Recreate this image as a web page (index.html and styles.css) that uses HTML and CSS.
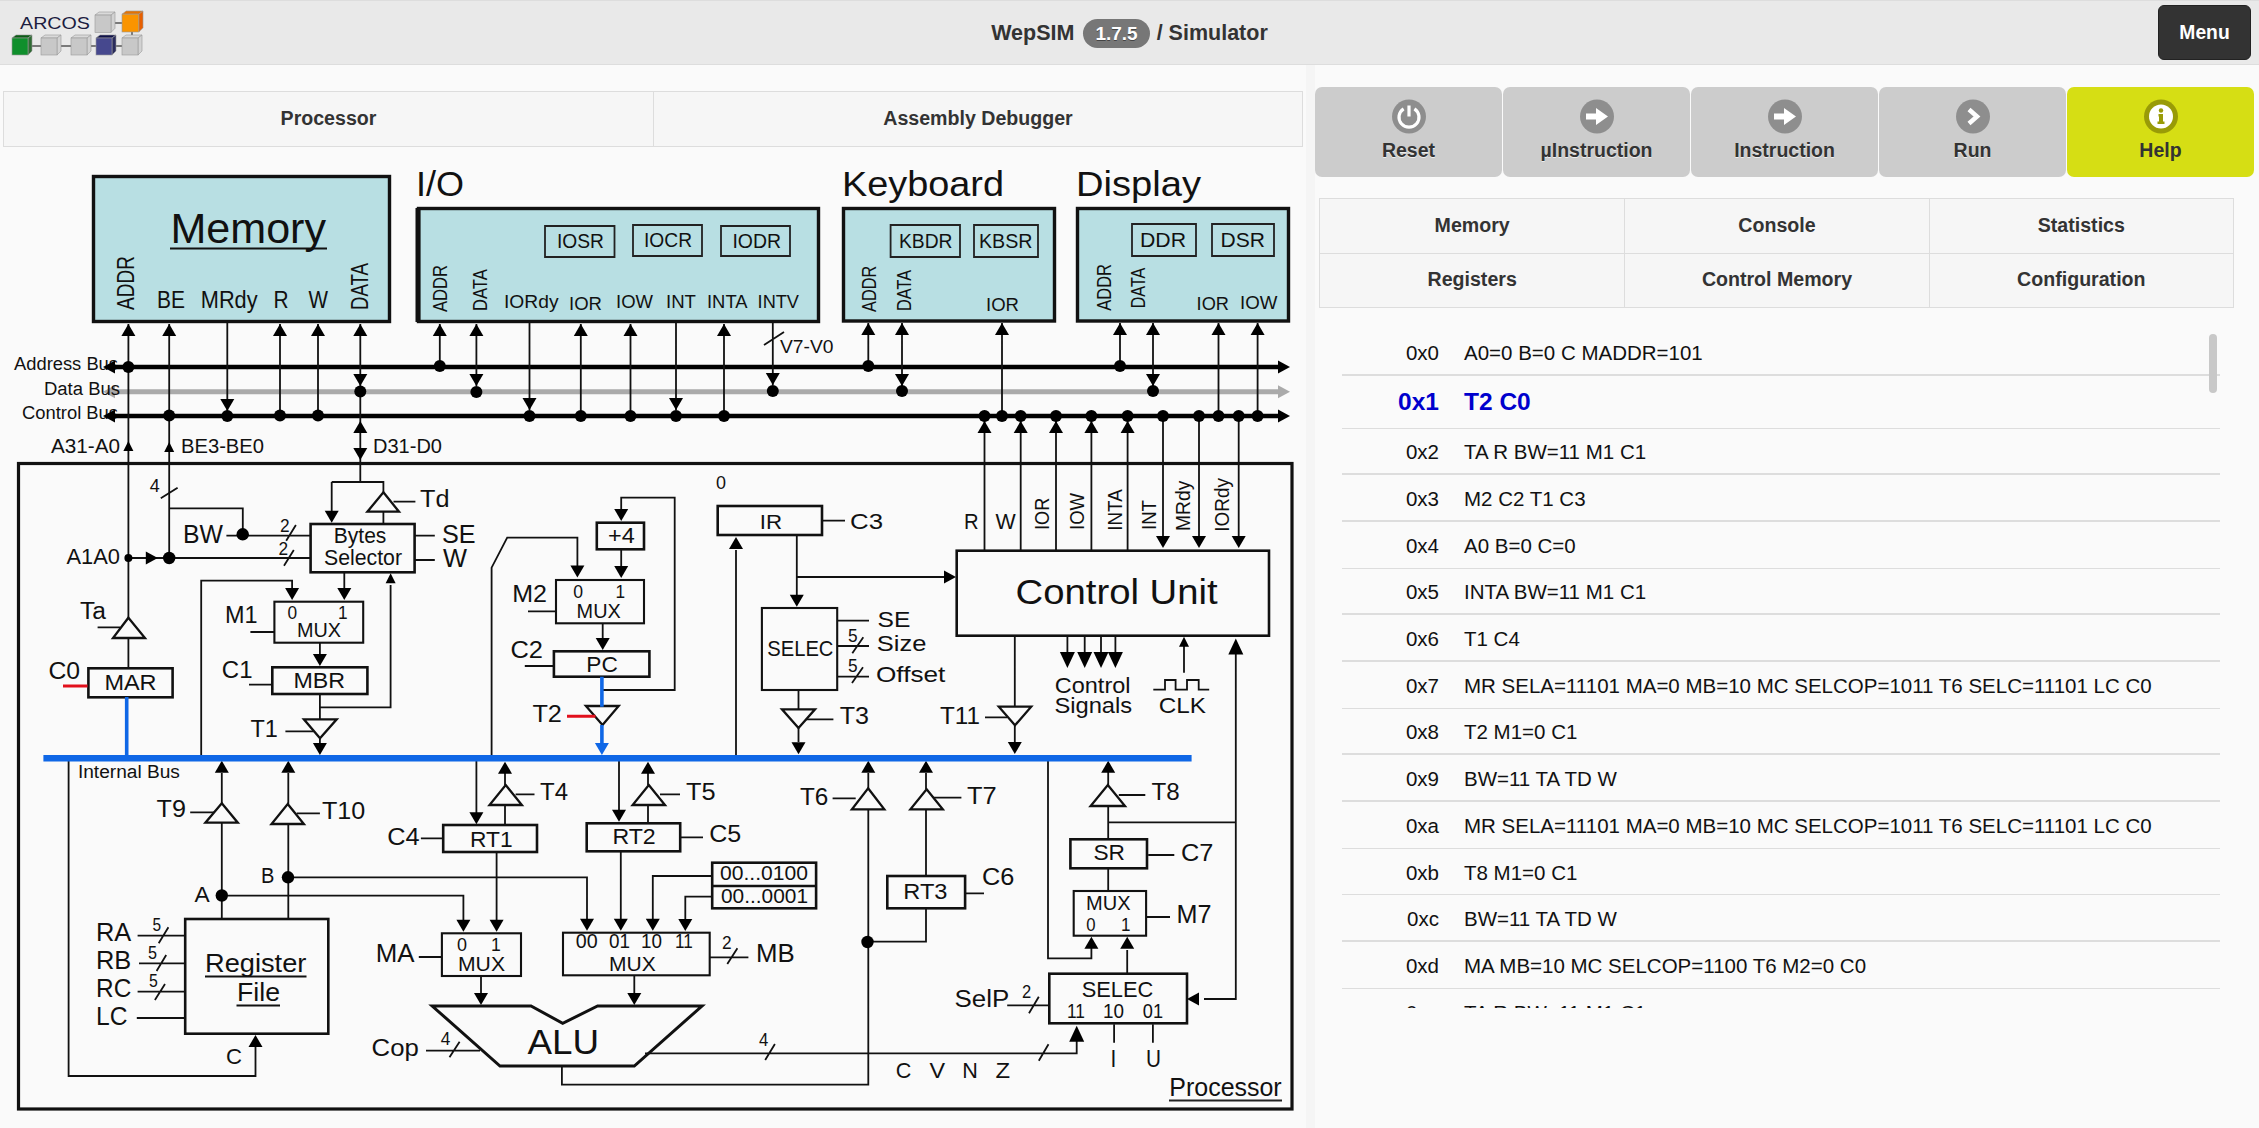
FILE: index.html
```html
<!DOCTYPE html>
<html lang="en">
<head>
    <meta charset="UTF-8">
    <meta name="viewport" content="width=device-width, initial-scale=1.0">
    <title>WepSIM</title>
    <link rel="stylesheet" href="styles.css">
</head>
<body>

    <header class="navbar">
        <svg class="logo" width="150" height="64" viewBox="0 0 150 64">
            <defs>
                <g id="cube">
                    <path class="cube-top" d="M0 3 L4 0 H20 L16 3 Z"/>
                    <path class="cube-side" d="M16 3 L20 0 V16 L16 20 Z"/>
                    <rect class="cube-front" x="0" y="3" width="16" height="17"/>
                </g>
            </defs>
            <text class="logo-text" x="20" y="29" textLength="70" lengthAdjust="spacingAndGlyphs">ARCOS</text>
            <path class="logo-link" d="M112 23H122 M132 32V38 M30 46H41 M58 46H71 M88 46H96 M114 46H122"/>
            <use class="cube-grey" href="#cube" transform="translate(95 12) scale(1 1.02)"/>
            <use class="cube-orange" href="#cube" transform="translate(122 11) scale(1.05 1.05)"/>
            <use class="cube-green" href="#cube" transform="translate(12 35)"/>
            <use class="cube-grey" href="#cube" transform="translate(41 35)"/>
            <use class="cube-grey" href="#cube" transform="translate(71 35)"/>
            <use class="cube-blue" href="#cube" transform="translate(96 35)"/>
            <use class="cube-grey" href="#cube" transform="translate(122 35)"/>
        </svg>
        <h1 class="title">WepSIM <span class="badge">1.7.5</span> / Simulator</h1>
        <div class="nav-right"><button class="menu-btn">Menu</button></div>
    </header>

    <main class="page">
        <section class="left">
            <nav class="tabs tabs-left">
                <a>Processor</a>
                <a>Assembly Debugger</a>
            </nav>

            <svg class="diagram" width="1306" height="981" viewBox="0 147 1306 981">
                <defs>
                    <path id="au" d="M0 0L7 12H-7Z"/>
                    <path id="ad" d="M0 0L-7 -12H7Z"/>
                    <path id="ar" d="M0 0L-12 -6.5V6.5Z"/>
                    <path id="al" d="M0 0L12 -6.5V6.5Z"/>
                    <path id="aus" d="M0 0L5 10H-5Z"/>
                    <path id="aul" d="M0 0L7.5 16H-7.5Z"/>
                    <path id="adl" d="M0 0L-7.5 -16H7.5Z"/>
                </defs>

                <!-- memory and peripherals -->
                <rect class="device" x="93.5" y="176.5" width="296" height="145"/>
                <rect class="device" x="418.5" y="208.5" width="400" height="113"/>
                <rect class="device" x="843.5" y="208.5" width="211" height="112.5"/>
                <rect class="device" x="1077.5" y="208.5" width="211" height="112.5"/>
                <path class="box" d="M418 208V322"/>

                <text class="t-title" x="416" y="196" textLength="48" lengthAdjust="spacingAndGlyphs">I/O</text>
                <text class="t-title" x="842" y="196" textLength="162" lengthAdjust="spacingAndGlyphs">Keyboard</text>
                <text class="t-title" x="1076" y="196" textLength="125" lengthAdjust="spacingAndGlyphs">Display</text>

                <text class="t-big" x="170.5" y="243" textLength="155.5" lengthAdjust="spacingAndGlyphs">Memory</text>
                <path class="ul3" d="M170 248.5H327"/>
                <text class="rot-lg" x="134" y="310" transform="rotate(-90 134 310)" textLength="54" lengthAdjust="spacingAndGlyphs">ADDR</text>
                <text class="t-xl" x="157" y="308" textLength="28" lengthAdjust="spacingAndGlyphs">BE</text>
                <text class="t-xl" x="200.8" y="308" textLength="56.8" lengthAdjust="spacingAndGlyphs">MRdy</text>
                <text class="t-xl" x="273.6" y="308" textLength="15.1" lengthAdjust="spacingAndGlyphs">R</text>
                <text class="t-xl" x="308.5" y="308" textLength="19.5" lengthAdjust="spacingAndGlyphs">W</text>
                <text class="rot-lg" x="368" y="310" transform="rotate(-90 368 310)" textLength="47" lengthAdjust="spacingAndGlyphs">DATA</text>

                <path class="thin" d="M545 226H614.5V257H545Z M633 225H702V256H633Z M721 226H790V256H721Z M890.6 225H960V257H890.6Z M974 225H1038V257H974Z M1132 224H1196V256H1132Z M1212 224H1274V256H1212Z"/>
                <text class="t-r" x="557" y="248" textLength="47" lengthAdjust="spacingAndGlyphs">IOSR</text>
                <text class="t-r" x="644" y="247" textLength="48" lengthAdjust="spacingAndGlyphs">IOCR</text>
                <text class="t-r" x="732.4" y="248" textLength="48.6" lengthAdjust="spacingAndGlyphs">IODR</text>
                <text class="t-r" x="899" y="248" textLength="53.5" lengthAdjust="spacingAndGlyphs">KBDR</text>
                <text class="t-r" x="979" y="248" textLength="53.5" lengthAdjust="spacingAndGlyphs">KBSR</text>
                <text class="t-r" x="1140" y="246.7" textLength="46" lengthAdjust="spacingAndGlyphs">DDR</text>
                <text class="t-r" x="1220.6" y="247" textLength="44.4" lengthAdjust="spacingAndGlyphs">DSR</text>

                <text class="rot" x="447.4" y="312" transform="rotate(-90 447.4 312)" textLength="47" lengthAdjust="spacingAndGlyphs">ADDR</text>
                <text class="rot" x="487" y="311" transform="rotate(-90 487 311)" textLength="41.7" lengthAdjust="spacingAndGlyphs">DATA</text>
                <text class="t-s" x="504" y="308" textLength="54.5" lengthAdjust="spacingAndGlyphs">IORdy</text>
                <text class="t-s" x="569" y="310" textLength="33" lengthAdjust="spacingAndGlyphs">IOR</text>
                <text class="t-s" x="616" y="308" textLength="37" lengthAdjust="spacingAndGlyphs">IOW</text>
                <text class="t-s" x="666" y="308" textLength="30" lengthAdjust="spacingAndGlyphs">INT</text>
                <text class="t-s" x="707" y="308" textLength="40.5" lengthAdjust="spacingAndGlyphs">INTA</text>
                <text class="t-s" x="757.6" y="308" textLength="41.4" lengthAdjust="spacingAndGlyphs">INTV</text>

                <text class="rot" x="876" y="312" transform="rotate(-90 876 312)" textLength="46.3" lengthAdjust="spacingAndGlyphs">ADDR</text>
                <text class="rot" x="911" y="311" transform="rotate(-90 911 311)" textLength="41" lengthAdjust="spacingAndGlyphs">DATA</text>
                <text class="t-s" x="986" y="311" textLength="33" lengthAdjust="spacingAndGlyphs">IOR</text>
                <text class="rot" x="1111" y="310.7" transform="rotate(-90 1111 310.7)" textLength="46.7" lengthAdjust="spacingAndGlyphs">ADDR</text>
                <text class="rot" x="1145" y="308.3" transform="rotate(-90 1145 308.3)" textLength="40.6" lengthAdjust="spacingAndGlyphs">DATA</text>
                <text class="t-s" x="1196.6" y="310" textLength="32.4" lengthAdjust="spacingAndGlyphs">IOR</text>
                <text class="t-s" x="1240" y="309" textLength="37.4" lengthAdjust="spacingAndGlyphs">IOW</text>

                <!-- system buses -->
                <text class="t-xs" x="14" y="370" textLength="104" lengthAdjust="spacingAndGlyphs">Address Bus</text>
                <text class="t-xs" x="22" y="419" textLength="96" lengthAdjust="spacingAndGlyphs">Control Bus</text>
                <path class="bus" d="M112 367H1282 M112 416H1282"/>
                <path class="bus-grey" d="M112 391.7H1282"/>
                <use href="#al" x="103" y="367"/><use href="#al" x="103" y="416"/>
                <use href="#ar" x="1290" y="367"/><use href="#ar" x="1290" y="416"/>
                <use class="grey-fill" href="#al" x="103" y="391.7"/><use class="grey-fill" href="#ar" x="1290" y="391.7"/>
                <text class="t-xs" x="44" y="395" textLength="76" lengthAdjust="spacingAndGlyphs">Data Bus</text>

                <path class="wire" d="M128.4 324V618 M169.2 324V558 M227.3 323V411 M280 324V416 M318 324V416 M360.3 324V482
                    M439.8 324V366 M476.4 324V386 M529.5 323V410 M580.8 324V416 M630.5 324V416 M676 323V410 M724 324V416 M772.8 323V385 M764 345L784 332
                    M868.3 323V366 M902 323V386 M1002 323V416 M1120 323V366 M1153 323V386 M1218.5 323V416 M1257.6 323V416
                    M984.5 421V551 M1020.7 421V551 M1056 421V551 M1091.4 421V551 M1127.6 421V551 M1163 416V542 M1199 416V542 M1238.7 416V542"/>

                <g>
                    <use href="#au" x="128.4" y="324"/><use href="#au" x="169.2" y="324"/><use href="#au" x="280" y="324"/><use href="#au" x="318" y="324"/><use href="#au" x="360.3" y="324"/>
                    <use href="#ad" x="227.3" y="411"/><use href="#ad" x="360.3" y="386"/>
                    <use href="#au" x="439.8" y="324"/><use href="#au" x="476.4" y="324"/><use href="#ad" x="476.4" y="386"/><use href="#ad" x="529.5" y="410"/><use href="#au" x="580.8" y="324"/><use href="#au" x="630.5" y="324"/>
                    <use href="#ad" x="676" y="410"/><use href="#au" x="724" y="324"/><use href="#ad" x="772.8" y="385"/>
                    <use href="#au" x="868.3" y="323"/><use href="#au" x="902" y="323"/><use href="#ad" x="902" y="386"/><use href="#au" x="1002" y="323"/>
                    <use href="#au" x="1120" y="323"/><use href="#au" x="1153" y="323"/><use href="#ad" x="1153" y="386"/><use href="#au" x="1218.5" y="323"/><use href="#au" x="1257.6" y="323"/>
                    <use href="#au" x="984.5" y="421"/><use href="#au" x="1020.7" y="421"/><use href="#au" x="1056" y="421"/><use href="#au" x="1091.4" y="421"/><use href="#au" x="1127.6" y="421"/>
                    <use href="#ad" x="1163" y="548"/><use href="#ad" x="1199" y="548"/><use href="#ad" x="1238.7" y="548"/>
                    <use href="#aus" x="128.4" y="441"/><use href="#aus" x="169.2" y="442"/>
                    <use href="#au" x="360.3" y="421"/><use href="#ad" x="360.3" y="460"/>
                </g>

                <g class="dots">
                    <circle cx="128.4" cy="367" r="6"/><circle cx="439.8" cy="366" r="6"/><circle cx="868.3" cy="366" r="6"/><circle cx="1120" cy="366" r="6"/>
                    <circle cx="360.3" cy="391.5" r="6"/><circle cx="476.4" cy="392" r="6"/><circle cx="772.8" cy="391" r="6"/><circle cx="902" cy="391" r="6"/><circle cx="1153" cy="391" r="6"/>
                    <circle cx="169.2" cy="415.5" r="6"/><circle cx="227.3" cy="416" r="6"/><circle cx="280" cy="415.5" r="6"/><circle cx="318" cy="415.5" r="6"/><circle cx="529.5" cy="416" r="6"/><circle cx="580.8" cy="416" r="6"/><circle cx="630.5" cy="416" r="6"/><circle cx="676" cy="416" r="6"/><circle cx="724" cy="416" r="6"/>
                    <circle cx="984.5" cy="416" r="6"/><circle cx="1002" cy="416" r="6"/><circle cx="1020.7" cy="416" r="6"/><circle cx="1056" cy="416" r="6"/><circle cx="1091.4" cy="416" r="6"/><circle cx="1127.6" cy="416" r="6"/><circle cx="1163" cy="416" r="6"/><circle cx="1199" cy="416" r="6"/><circle cx="1218.5" cy="416" r="6"/><circle cx="1238.7" cy="416" r="6"/><circle cx="1257.6" cy="416" r="6"/>
                </g>

                <text class="t-m" x="51" y="452.7" textLength="69" lengthAdjust="spacingAndGlyphs">A31-A0</text>
                <text class="t-m" x="181" y="453" textLength="83" lengthAdjust="spacingAndGlyphs">BE3-BE0</text>
                <text class="t-m" x="373" y="453" textLength="69" lengthAdjust="spacingAndGlyphs">D31-D0</text>
                <text class="t-s" x="780" y="353" textLength="53.4" lengthAdjust="spacingAndGlyphs">V7-V0</text>

                <!-- processor frame -->
                <rect class="frame" x="18.5" y="463.5" width="1273.5" height="645.5"/>
                <text class="t-h" x="1169.3" y="1095.7" textLength="112.4" lengthAdjust="spacingAndGlyphs">Processor</text>
                <path class="thin" d="M1169 1100.5H1282"/>

                <!-- thin wires of the processor -->
                <path class="wire" d="M331.7 482H383.4V493 M331.7 482V511 M383.4 511V524
                    M169.2 508.3H242.8V534 M226.4 535.7H310.6 M128.4 558H310.6
                    M160.8 498.3L177.6 487.7 M286.2 540.7L295.9 525 M284 565.7L293.8 550
                    M393.5 501.7H415.4 M414.6 535.7H434.8 M414.6 560H434.8
                    M344.3 572V590 M292.1 591V580.7H201.2V756
                    M319.9 642.7V654 M319.9 694V719.3 M319.9 707.3H390.6V585 M319.9 738.3V745
                    M250.4 632H274.4 M249 684.7H271.5 M285.4 731.3H313.6
                    M97.6 627.3H120 M128.4 638V668
                    M491.6 756V567.7L507.2 537.7H577.4V566
                    M602.7 690H674.7V497.7H621.2V511 M621.2 549.3V566 M602.7 623.3V639
                    M528 611.3H555.6 M524.8 666H553.4
                    M736 550V757 M796.8 535V596 M796.8 577H945 M822 520.7H845
                    M837 620.7H869 M837 646H869 M837 676.7H869 M852.3 653.3L863.3 637.3 M852 683L863 667.3
                    M798.5 690V709.3 M798.5 728V742 M805 719.3H833.4
                    M1014.8 635.7V706.7 M1014.8 725.3V745 M985 717.3H1007
                    M1067.4 636V653 M1084.7 636V653 M1101 636V653 M1115.4 636V653
                    M1184 672.7V642 M1153.3 689.7H1165V680H1175.6V689.7H1187V680H1198.7V689.7H1209.2
                    M1235.8 653V999H1204
                    M68.6 761V1076H255.5V1043
                    M221.8 773V803.3 M221.8 822.7V919 M190.2 812.3H214.6
                    M288.3 773V804 M288.3 824V919 M296.7 813.3H319.9
                    M137.6 935.7H185 M139 963.3H185 M137.6 991.7H185 M136.8 1018H185
                    M158.7 943.3L168.4 927.3 M156.6 971L166.2 955 M154.9 1000L165 984
                    M476.4 761V813 M505 772.7V785 M505 805V825 M515.6 794.3H534.5 M420.9 838.3H443.2
                    M496.6 852V920 M221.8 895.7H463.4V920 M288.3 877.3H587V919
                    M418.8 957H441.9 M481 976V996
                    M426 1050.7H480 M449.5 1057.3L459.6 1041.7
                    M561.9 1066V1084.7H868.3V809 M868.3 773V788.3 M832.6 798.3H855.7
                    M926 773V789.3 M926 809.3V876 M926 908V941.7H868 M933.6 797.7H961.4 M965 893.3H984
                    M619 761V811 M648 773V785 M648 805V823 M660 794.3H680 M680 837.3H703
                    M620.8 851V919 M652.8 919V876H712 M685.3 921V896.7H712
                    M634.3 975V996 M709.7 957.3H748.4 M727.3 964L737.4 948.3
                    M645 1053.3H1076.7V1041 M765.2 1060L774.9 1044 M1038.8 1060.7L1048.5 1044.3
                    M1048 761V958.3H1091.4V948 M1108.2 771V785 M1108.2 806V839.3 M1108.2 822.3H1235.8 M1118.8 795H1145.3
                    M1148.2 855H1174.3 M1108.2 868V891 M1146 917H1170 M1127.2 973.7V950
                    M1007.2 1005.3H1049.3 M1029 1013.3L1038.8 996.7 M1114.1 1024.3V1042.7 M1152.9 1024.3V1042.7"/>

                <!-- registers and blocks -->
                <g class="block">
                    <rect x="88.4" y="668.3" width="84.2" height="29"/>
                    <rect x="310.6" y="524" width="104" height="48.3"/>
                    <rect x="272.3" y="667.3" width="95.1" height="26.7"/>
                    <rect x="596.8" y="522.7" width="47.2" height="26.6"/>
                    <rect x="553.9" y="651.3" width="95.5" height="25.4"/>
                    <rect x="717.7" y="506" width="104.3" height="29"/>
                    <rect x="956.7" y="550.7" width="312.3" height="85"/>
                    <rect x="185.2" y="919" width="143.1" height="114.7"/>
                    <rect x="443.2" y="825" width="93.8" height="27"/>
                    <rect x="586.7" y="823.3" width="93.5" height="28"/>
                    <rect x="887.3" y="876" width="77.8" height="32.3"/>
                    <rect x="1070.4" y="839.3" width="76.6" height="29"/>
                    <rect x="1049.3" y="973.7" width="137.7" height="49.6"/>
                    <rect x="712.2" y="862.7" width="103.9" height="45.6"/>
                    <path d="M712 886H816"/>
                </g>
                <g class="block-thin">
                    <rect x="274.4" y="601.7" width="88.8" height="41"/>
                    <rect x="556" y="580" width="88" height="43.3"/>
                    <rect x="761.9" y="608" width="75.3" height="82"/>
                    <rect x="441.9" y="933.3" width="79.1" height="42.7"/>
                    <rect x="563" y="932.7" width="146.7" height="42.6"/>
                    <rect x="1073.7" y="891" width="72.4" height="44.7"/>
                </g>
                <path class="alu" d="M432.2 1006H531L562.7 1023.3L597.6 1006H702L634.3 1066H500Z"/>

                <!-- tristate buffers -->
                <g class="block-thin tri">
                    <path d="M128.4 617.7L145 638H113Z"/>
                    <path d="M383.4 492.3L399 511.7H367.4Z"/>
                    <path d="M320 738.3L336.7 719.3H303.9Z"/>
                    <path d="M602.5 725L618.7 706H585.9Z"/>
                    <path d="M798.5 728L815 709.3H782Z"/>
                    <path d="M1015 725.3L1031.2 706.7H998.8Z"/>
                    <path d="M221.8 803.3L237.8 822.7H205.4Z"/>
                    <path d="M287.7 804L303.9 824H271.5Z"/>
                    <path d="M505.7 785L521.9 805H489.5Z"/>
                    <path d="M648.8 785L665 805H632.6Z"/>
                    <path d="M868.1 788.3L884.3 809.3H851.9Z"/>
                    <path d="M926.6 789.3L942.8 809.3H910.4Z"/>
                    <path d="M1107.8 785L1125 806H1090.6Z"/>
                </g>

                <!-- arrowheads inside -->
                <g>
                    <use href="#ad" x="331.7" y="522.7"/><use href="#ad" x="344.3" y="600"/><use href="#ad" x="292.1" y="600"/>
                    <use href="#ad" x="319.9" y="666"/><use href="#ad" x="319.9" y="755"/><use href="#aus" x="390.6" y="573.3"/>
                    <use href="#ar" x="157.8" y="558"/>
                    <use href="#ad" x="577.4" y="577.5"/><use href="#ad" x="621.2" y="521"/><use href="#ad" x="621.2" y="578"/><use href="#ad" x="602.7" y="650"/>
                    <use href="#au" x="736" y="537"/><use href="#ad" x="796.8" y="606.7"/><use href="#ar" x="956" y="577"/>
                    <use href="#ad" x="798.5" y="754.3"/><use href="#ad" x="1014.8" y="754"/>
                    <use href="#adl" x="1067.4" y="668"/><use href="#adl" x="1084.7" y="668"/><use href="#adl" x="1101" y="668"/><use href="#adl" x="1115.4" y="668"/>
                    <use href="#aus" x="1184" y="636.7"/><use href="#aul" x="1235.8" y="638.5"/><use href="#al" x="1187" y="999"/>
                    <use href="#au" x="255.5" y="1035"/><use href="#au" x="221.8" y="760.7"/><use href="#au" x="288.3" y="760.7"/><use href="#au" x="505" y="761.7"/><use href="#au" x="648" y="761.7"/>
                    <use href="#ad" x="476.4" y="824.3"/><use href="#ad" x="619" y="821.7"/>
                    <use href="#ad" x="463.4" y="931.7"/><use href="#ad" x="496.6" y="931.7"/><use href="#ad" x="587" y="930.7"/><use href="#ad" x="620.8" y="930.7"/><use href="#ad" x="652.8" y="930.7"/><use href="#ad" x="685.3" y="931"/>
                    <use href="#ad" x="481" y="1005"/><use href="#ad" x="634.3" y="1005"/>
                    <use href="#au" x="868.3" y="760.7"/><use href="#au" x="926" y="760.7"/><use href="#au" x="1108.2" y="760.7"/>
                    <use href="#au" x="1091.4" y="936.7"/><use href="#au" x="1127.2" y="936.7"/><use href="#aul" x="1076.7" y="1025.7"/>
                </g>
                <g class="dots">
                    <circle cx="128.4" cy="558" r="4"/><circle cx="169.2" cy="558" r="6.2"/><circle cx="242.7" cy="534.3" r="6.2"/>
                    <circle cx="221.8" cy="895.5" r="6.2"/><circle cx="288" cy="877.3" r="6.2"/><circle cx="867.5" cy="942" r="6.2"/>
                </g>

                <!-- internal bus and highlighted path -->
                <path class="blue-wire" d="M126.7 697V756 M601.9 676.7V706.7 M601.9 725V745"/>
                <path class="int-bus" d="M43.4 758.3H1191.6"/>
                <use class="blue-fill" href="#ad" x="601.9" y="755"/>
                <path class="red-wire" d="M63 686H87.5 M567 716.3H595.5"/>

                <!-- labels -->
                <text class="t-xs" x="77.9" y="778.3" textLength="102" lengthAdjust="spacingAndGlyphs">Internal Bus</text>
                <text class="t-l" x="104.4" y="690" textLength="52.2" lengthAdjust="spacingAndGlyphs">MAR</text>
                <text class="t-xl" x="80" y="619.3" textLength="26" lengthAdjust="spacingAndGlyphs">Ta</text>
                <text class="t-xl" x="48.4" y="679.3" textLength="31.6" lengthAdjust="spacingAndGlyphs">C0</text>
                <text class="t-l" x="66.5" y="564" textLength="53.5" lengthAdjust="spacingAndGlyphs">A1A0</text>
                <text class="t-s" x="149.8" y="491.7" textLength="10" lengthAdjust="spacingAndGlyphs">4</text>
                <text class="t-h" x="183" y="542.7" textLength="40" lengthAdjust="spacingAndGlyphs">BW</text>
                <text class="t-s" x="280" y="531.7" textLength="9.6" lengthAdjust="spacingAndGlyphs">2</text>
                <text class="t-s" x="278.6" y="555" textLength="9.6" lengthAdjust="spacingAndGlyphs">2</text>
                <text class="t-l" x="333.8" y="542.7" textLength="52.6" lengthAdjust="spacingAndGlyphs">Bytes</text>
                <text class="t-l" x="324" y="565" textLength="78" lengthAdjust="spacingAndGlyphs">Selector</text>
                <text class="t-xl" x="420" y="507.3" textLength="29.5" lengthAdjust="spacingAndGlyphs">Td</text>
                <text class="t-xxl" x="442" y="542.7" textLength="33.6" lengthAdjust="spacingAndGlyphs">SE</text>
                <text class="t-xxl" x="443" y="567.3" textLength="24" lengthAdjust="spacingAndGlyphs">W</text>
                <text class="t-s" x="287.5" y="619" textLength="9.6" lengthAdjust="spacingAndGlyphs">0</text>
                <text class="t-s" x="338" y="619" textLength="9.6" lengthAdjust="spacingAndGlyphs">1</text>
                <text class="t-m" x="297" y="637.3" textLength="44" lengthAdjust="spacingAndGlyphs">MUX</text>
                <text class="t-xl" x="225" y="622.7" textLength="32.6" lengthAdjust="spacingAndGlyphs">M1</text>
                <text class="t-l" x="293.4" y="687.7" textLength="51.6" lengthAdjust="spacingAndGlyphs">MBR</text>
                <text class="t-xl" x="221.8" y="677.7" textLength="30.7" lengthAdjust="spacingAndGlyphs">C1</text>
                <text class="t-xl" x="250.4" y="737.3" textLength="27.4" lengthAdjust="spacingAndGlyphs">T1</text>
                <text class="t-l" x="608" y="542.7" textLength="26.7" lengthAdjust="spacingAndGlyphs">+4</text>
                <text class="t-s" x="573.2" y="598.3" textLength="9.8" lengthAdjust="spacingAndGlyphs">0</text>
                <text class="t-s" x="615.4" y="598.3" textLength="9.6" lengthAdjust="spacingAndGlyphs">1</text>
                <text class="t-m" x="576.6" y="618.3" textLength="44.2" lengthAdjust="spacingAndGlyphs">MUX</text>
                <text class="t-xl" x="512.2" y="601.7" textLength="34.8" lengthAdjust="spacingAndGlyphs">M2</text>
                <text class="t-l" x="586.3" y="671.7" textLength="31.5" lengthAdjust="spacingAndGlyphs">PC</text>
                <text class="t-xl" x="510.5" y="658.3" textLength="32.5" lengthAdjust="spacingAndGlyphs">C2</text>
                <text class="t-xl" x="532.4" y="722.3" textLength="29.5" lengthAdjust="spacingAndGlyphs">T2</text>
                <text class="t-s" x="716" y="489" textLength="10" lengthAdjust="spacingAndGlyphs">0</text>
                <text class="t-r" x="759.7" y="529" textLength="22.3" lengthAdjust="spacingAndGlyphs">IR</text>
                <text class="t-l" x="850" y="529" textLength="33" lengthAdjust="spacingAndGlyphs">C3</text>
                <text class="t-l" x="964" y="529" textLength="14.6" lengthAdjust="spacingAndGlyphs">R</text>
                <text class="t-l" x="995.4" y="529" textLength="20.2" lengthAdjust="spacingAndGlyphs">W</text>
                <text class="rot" x="1049.3" y="530" transform="rotate(-90 1049.3 530)" textLength="32.3" lengthAdjust="spacingAndGlyphs">IOR</text>
                <text class="rot" x="1084" y="530" transform="rotate(-90 1084 530)" textLength="37" lengthAdjust="spacingAndGlyphs">IOW</text>
                <text class="rot" x="1121.7" y="530.7" transform="rotate(-90 1121.7 530.7)" textLength="41.4" lengthAdjust="spacingAndGlyphs">INTA</text>
                <text class="rot" x="1155.8" y="530" transform="rotate(-90 1155.8 530)" textLength="30" lengthAdjust="spacingAndGlyphs">INT</text>
                <text class="rot" x="1189.5" y="531" transform="rotate(-90 1189.5 531)" textLength="50.3" lengthAdjust="spacingAndGlyphs">MRdy</text>
                <text class="rot" x="1229.5" y="531.7" transform="rotate(-90 1229.5 531.7)" textLength="53.7" lengthAdjust="spacingAndGlyphs">IORdy</text>
                <text class="t-title" x="1015.6" y="604" textLength="202.1" lengthAdjust="spacingAndGlyphs">Control Unit</text>
                <text class="t-l" x="767.3" y="656" textLength="66.1" lengthAdjust="spacingAndGlyphs">SELEC</text>
                <text class="t-l" x="877.6" y="626.7" textLength="32.8" lengthAdjust="spacingAndGlyphs">SE</text>
                <text class="t-s" x="848" y="641.7" textLength="9.6" lengthAdjust="spacingAndGlyphs">5</text>
                <text class="t-l" x="876.8" y="651" textLength="49.6" lengthAdjust="spacingAndGlyphs">Size</text>
                <text class="t-s" x="848" y="671.7" textLength="9.6" lengthAdjust="spacingAndGlyphs">5</text>
                <text class="t-l" x="876" y="682" textLength="69.4" lengthAdjust="spacingAndGlyphs">Offset</text>
                <text class="t-xl" x="839.7" y="724" textLength="29.3" lengthAdjust="spacingAndGlyphs">T3</text>
                <text class="t-xl" x="940" y="724" textLength="40" lengthAdjust="spacingAndGlyphs">T11</text>
                <text class="t-l" x="1054.8" y="692.7" textLength="75.7" lengthAdjust="spacingAndGlyphs">Control</text>
                <text class="t-l" x="1054.4" y="713.3" textLength="77.8" lengthAdjust="spacingAndGlyphs">Signals</text>
                <text class="t-l" x="1158.7" y="713.3" textLength="47.2" lengthAdjust="spacingAndGlyphs">CLK</text>

                <text class="t-xl" x="156.6" y="816.7" textLength="29.4" lengthAdjust="spacingAndGlyphs">T9</text>
                <text class="t-xl" x="322" y="819" textLength="43.3" lengthAdjust="spacingAndGlyphs">T10</text>
                <text class="t-l" x="194.4" y="902.3" textLength="15.2" lengthAdjust="spacingAndGlyphs">A</text>
                <text class="t-l" x="261" y="883.3" textLength="13.4" lengthAdjust="spacingAndGlyphs">B</text>
                <text class="t-l" x="226" y="1064" textLength="16" lengthAdjust="spacingAndGlyphs">C</text>
                <text class="t-h" x="205" y="971.7" textLength="101.4" lengthAdjust="spacingAndGlyphs">Register</text>
                <text class="t-h" x="237" y="1000.7" textLength="43" lengthAdjust="spacingAndGlyphs">File</text>
                <path class="wire" d="M205 976.5H306.5 M236.5 1005.5H280"/>
                <text class="t-h" x="96" y="941" textLength="35.3" lengthAdjust="spacingAndGlyphs">RA</text>
                <text class="t-h" x="96" y="969" textLength="35.3" lengthAdjust="spacingAndGlyphs">RB</text>
                <text class="t-h" x="96" y="997" textLength="35.3" lengthAdjust="spacingAndGlyphs">RC</text>
                <text class="t-h" x="96" y="1025" textLength="31.5" lengthAdjust="spacingAndGlyphs">LC</text>
                <text class="t-s" x="152.4" y="930.7" textLength="8.6" lengthAdjust="spacingAndGlyphs">5</text>
                <text class="t-s" x="148" y="959" textLength="9" lengthAdjust="spacingAndGlyphs">5</text>
                <text class="t-s" x="149" y="987.3" textLength="8.8" lengthAdjust="spacingAndGlyphs">5</text>
                <text class="t-xl" x="540" y="800" textLength="28" lengthAdjust="spacingAndGlyphs">T4</text>
                <text class="t-l" x="470" y="846.7" textLength="42.6" lengthAdjust="spacingAndGlyphs">RT1</text>
                <text class="t-xl" x="387.2" y="845" textLength="32.4" lengthAdjust="spacingAndGlyphs">C4</text>
                <text class="t-s" x="457" y="950.7" textLength="10" lengthAdjust="spacingAndGlyphs">0</text>
                <text class="t-s" x="491" y="950.7" textLength="9.8" lengthAdjust="spacingAndGlyphs">1</text>
                <text class="t-m" x="458" y="971" textLength="47" lengthAdjust="spacingAndGlyphs">MUX</text>
                <text class="t-xxl" x="375.8" y="962.3" textLength="38.8" lengthAdjust="spacingAndGlyphs">MA</text>
                <text class="t-title" x="527.4" y="1054.3" textLength="71.6" lengthAdjust="spacingAndGlyphs">ALU</text>
                <text class="t-xl" x="371.6" y="1055.7" textLength="47.2" lengthAdjust="spacingAndGlyphs">Cop</text>
                <text class="t-s" x="440.7" y="1045" textLength="9.6" lengthAdjust="spacingAndGlyphs">4</text>
                <text class="t-l" x="612.4" y="844.3" textLength="43.3" lengthAdjust="spacingAndGlyphs">RT2</text>
                <text class="t-xl" x="686" y="800" textLength="29.6" lengthAdjust="spacingAndGlyphs">T5</text>
                <text class="t-xl" x="709.2" y="841.7" textLength="32" lengthAdjust="spacingAndGlyphs">C5</text>
                <text class="t-m" x="575.8" y="948.3" textLength="21.9" lengthAdjust="spacingAndGlyphs">00</text>
                <text class="t-m" x="609" y="948.3" textLength="21" lengthAdjust="spacingAndGlyphs">01</text>
                <text class="t-m" x="641" y="948.3" textLength="21" lengthAdjust="spacingAndGlyphs">10</text>
                <text class="t-m" x="675" y="948.3" textLength="17.8" lengthAdjust="spacingAndGlyphs">11</text>
                <text class="t-m" x="609" y="971" textLength="46.7" lengthAdjust="spacingAndGlyphs">MUX</text>
                <text class="t-r" x="720" y="880" textLength="88" lengthAdjust="spacingAndGlyphs">00...0100</text>
                <text class="t-r" x="721" y="903.3" textLength="87" lengthAdjust="spacingAndGlyphs">00...0001</text>
                <text class="t-s" x="721.9" y="949" textLength="9.6" lengthAdjust="spacingAndGlyphs">2</text>
                <text class="t-xxl" x="756" y="962.3" textLength="38.7" lengthAdjust="spacingAndGlyphs">MB</text>
                <text class="t-xl" x="800" y="805" textLength="28.4" lengthAdjust="spacingAndGlyphs">T6</text>
                <text class="t-xl" x="967" y="804.3" textLength="29.7" lengthAdjust="spacingAndGlyphs">T7</text>
                <text class="t-l" x="903.3" y="899.3" textLength="44.2" lengthAdjust="spacingAndGlyphs">RT3</text>
                <text class="t-xl" x="982" y="885" textLength="32.4" lengthAdjust="spacingAndGlyphs">C6</text>
                <text class="t-s" x="758.9" y="1045.7" textLength="9.3" lengthAdjust="spacingAndGlyphs">4</text>
                <text class="t-l" x="895.7" y="1078.3" textLength="15.6" lengthAdjust="spacingAndGlyphs">C</text>
                <text class="t-l" x="929.4" y="1078.3" textLength="15.6" lengthAdjust="spacingAndGlyphs">V</text>
                <text class="t-l" x="962.2" y="1078.3" textLength="15.6" lengthAdjust="spacingAndGlyphs">N</text>
                <text class="t-l" x="995.4" y="1078.3" textLength="14.6" lengthAdjust="spacingAndGlyphs">Z</text>
                <text class="t-xl" x="1151.6" y="800" textLength="28.2" lengthAdjust="spacingAndGlyphs">T8</text>
                <text class="t-l" x="1093.5" y="860" textLength="31.5" lengthAdjust="spacingAndGlyphs">SR</text>
                <text class="t-xl" x="1181" y="861" textLength="32.4" lengthAdjust="spacingAndGlyphs">C7</text>
                <text class="t-m" x="1086" y="910" textLength="44.5" lengthAdjust="spacingAndGlyphs">MUX</text>
                <text class="t-s" x="1086.3" y="930.7" textLength="9.3" lengthAdjust="spacingAndGlyphs">0</text>
                <text class="t-s" x="1121" y="930.7" textLength="9.5" lengthAdjust="spacingAndGlyphs">1</text>
                <text class="t-xxl" x="1176.4" y="923.3" textLength="35" lengthAdjust="spacingAndGlyphs">M7</text>
                <text class="t-l" x="1081.7" y="996.7" textLength="71.6" lengthAdjust="spacingAndGlyphs">SELEC</text>
                <text class="t-m" x="1067" y="1018.3" textLength="18" lengthAdjust="spacingAndGlyphs">11</text>
                <text class="t-m" x="1103" y="1018.3" textLength="21" lengthAdjust="spacingAndGlyphs">10</text>
                <text class="t-m" x="1142.8" y="1018.3" textLength="20.2" lengthAdjust="spacingAndGlyphs">01</text>
                <text class="t-xl" x="954.6" y="1006.7" textLength="54.7" lengthAdjust="spacingAndGlyphs">SelP</text>
                <text class="t-s" x="1022" y="998.3" textLength="9.2" lengthAdjust="spacingAndGlyphs">2</text>
                <text class="t-xl" x="1110.5" y="1066.7" textLength="5.8" lengthAdjust="spacingAndGlyphs">I</text>
                <text class="t-xl" x="1146" y="1066.7" textLength="15" lengthAdjust="spacingAndGlyphs">U</text>
            </svg>
        </section>

        <section class="right">
            <div class="toolbar">
                <button class="tool">
                    <svg class="tool-icon" width="34" height="35" viewBox="0 0 34 35">
                        <circle cx="17" cy="17.5" r="17" fill="#8e8e8e"/>
                        <path d="M11.6 9.8A10 10 0 1 0 22.4 9.8" fill="none" stroke="#fff" stroke-width="3.2"/>
                        <path d="M17 6.5V17.5" stroke="#fff" stroke-width="3.2"/>
                    </svg>
                    <span>Reset</span>
                </button>
                <button class="tool">
                    <svg class="tool-icon" width="34" height="35" viewBox="0 0 34 35">
                        <circle cx="17" cy="17.5" r="17" fill="#8e8e8e"/>
                        <path d="M6 14.5H16V9L28 17.5L16 26V20.5H6Z" fill="#fff"/>
                    </svg>
                    <span>µInstruction</span>
                </button>
                <button class="tool">
                    <svg class="tool-icon" width="34" height="35" viewBox="0 0 34 35">
                        <circle cx="17" cy="17.5" r="17" fill="#8e8e8e"/>
                        <path d="M6 14.5H16V9L28 17.5L16 26V20.5H6Z" fill="#fff"/>
                    </svg>
                    <span>Instruction</span>
                </button>
                <button class="tool">
                    <svg class="tool-icon" width="34" height="35" viewBox="0 0 34 35">
                        <circle cx="17" cy="17.5" r="17" fill="#8e8e8e"/>
                        <path d="M13 10.5L21 17.5L13 24.5" fill="none" stroke="#fff" stroke-width="4.5"/>
                    </svg>
                    <span>Run</span>
                </button>
                <button class="tool tool-help">
                    <svg class="tool-icon" width="34" height="35" viewBox="0 0 34 35">
                        <circle cx="17" cy="17.5" r="17" fill="#999b07"/>
                        <circle cx="17" cy="17.5" r="12" fill="#fff"/>
                        <circle cx="17" cy="11.5" r="2.2" fill="#999b07"/>
                        <path d="M14.5 15H19V22.5H20.5V25H13.5V22.5H15V17.5H14.5Z" fill="#999b07"/>
                    </svg>
                    <span>Help</span>
                </button>
            </div>

            <nav class="tabs tabs-right">
                <a>Memory</a>
                <a>Console</a>
                <a>Statistics</a>
                <a>Registers</a>
                <a>Control Memory</a>
                <a>Configuration</a>
            </nav>

            <div class="mc-list">
                <div class="mc-row thick"><span class="mc-addr">0x0</span><span>A0=0 B=0 C MADDR=101</span></div>
                <div class="mc-row current"><span class="mc-addr">0x1</span><span>T2 C0</span></div>
                <div class="mc-row thick"><span class="mc-addr">0x2</span><span>TA R BW=11 M1 C1</span></div>
                <div class="mc-row thick"><span class="mc-addr">0x3</span><span>M2 C2 T1 C3</span></div>
                <div class="mc-row"><span class="mc-addr">0x4</span><span>A0 B=0 C=0</span></div>
                <div class="mc-row thick"><span class="mc-addr">0x5</span><span>INTA BW=11 M1 C1</span></div>
                <div class="mc-row thick"><span class="mc-addr">0x6</span><span>T1 C4</span></div>
                <div class="mc-row"><span class="mc-addr">0x7</span><span>MR SELA=11101 MA=0 MB=10 MC SELCOP=1011 T6 SELC=11101 LC C0</span></div>
                <div class="mc-row thick"><span class="mc-addr">0x8</span><span>T2 M1=0 C1</span></div>
                <div class="mc-row thick"><span class="mc-addr">0x9</span><span>BW=11 TA TD W</span></div>
                <div class="mc-row"><span class="mc-addr">0xa</span><span>MR SELA=11101 MA=0 MB=10 MC SELCOP=1011 T6 SELC=11101 LC C0</span></div>
                <div class="mc-row"><span class="mc-addr">0xb</span><span>T8 M1=0 C1</span></div>
                <div class="mc-row thick"><span class="mc-addr">0xc</span><span>BW=11 TA TD W</span></div>
                <div class="mc-row"><span class="mc-addr">0xd</span><span>MA MB=10 MC SELCOP=1100 T6 M2=0 C0</span></div>
                <div class="mc-row"><span class="mc-addr">0xe</span><span>TA R BW=11 M1 C1</span></div>
                <div class="scroll-thumb"></div>
            </div>
        </section>
    </main>

</body>
</html>
```

FILE: styles.css
```css
* {
    box-sizing: border-box;
}
html, body {
    margin: 0;
    height: 100%;
    overflow: hidden;
}
body {
    font-family: "Liberation Sans", Arial, sans-serif;
    color: #333;
    background-color: #fafafa;
}

/* top bar */
.navbar {
    display: grid;
    grid-template-columns: 1fr auto 1fr;
    align-items: center;
    height: 65px;
    background-color: #e9e9e9;
    border-top: 1px solid #ddd;
    border-bottom: 1px solid #ddd;
}
.logo {
    display: block;
    margin-top: -1px;
}
.logo-text {
    font-size: 16.5px;
    fill: #1c1c40;
}
.logo-link {
    fill: none;
    stroke: #555;
    stroke-width: 1.5;
}
.cube-top { fill: var(--top); stroke: #999; stroke-width: 0.6; }
.cube-side { fill: var(--side); stroke: #999; stroke-width: 0.6; }
.cube-front { fill: var(--front); stroke: #999; stroke-width: 0.6; }
.cube-grey { --front: #c8c8c8; --top: #dadada; --side: #d2d2d2; }
.cube-orange { --front: #fa9400; --top: #e67300; --side: #e85f00; }
.cube-green { --front: #0f8f2c; --top: #0b5c16; --side: #2f6b34; }
.cube-blue { --front: #46488e; --top: #10124a; --side: #2a2c5c; }

.title {
    margin: 2px 0 0;
    font-size: 21.5px;
    font-weight: bold;
    color: #333;
    white-space: nowrap;
}
.badge {
    display: inline-block;
    min-width: 63px;
    padding: 0 12px;
    margin: 0 1px 0 3px;
    line-height: 29px;
    border-radius: 15px;
    font-size: 19px;
    text-align: center;
    color: #fff;
    background-color: #777;
    text-shadow: 0 1px 0 #444;
}
.nav-right {
    display: flex;
    justify-content: flex-end;
    padding-right: 8px;
}
.menu-btn {
    width: 93px;
    height: 55px;
    border: 1px solid #222;
    border-radius: 6px;
    font-family: inherit;
    font-size: 19.3px;
    font-weight: bold;
    color: #fff;
    background-color: #333;
}

/* page columns */
.page {
    display: flex;
    height: calc(100% - 65px);
}
.left {
    width: 1306px;
    padding-top: 26px;
}
.right {
    width: 953px;
    border-left: 9px solid #f5f5f5;
}

/* tabs */
.tabs {
    display: grid;
    font-size: 19.6px;
    font-weight: bold;
    color: #333;
    background-color: #f6f6f6;
    border: 1px solid #ddd;
}
.tabs a {
    display: flex;
    align-items: center;
    justify-content: center;
    padding-bottom: 2px;
}
.tabs-left {
    grid-template-columns: 1fr 1fr;
    width: 1300px;
    height: 56px;
    margin-left: 3px;
}
.tabs-left a + a {
    border-left: 1px solid #ddd;
}
.tabs-right {
    grid-template-columns: repeat(3, 1fr);
    grid-template-rows: 1fr 1fr;
    width: 915px;
    height: 110px;
    margin: 21px 0 0 4px;
}
.tabs-right a {
    border-left: 1px solid #ddd;
    border-top: 1px solid #ddd;
}
.tabs-right a:nth-child(3n+1) {
    border-left: none;
}
.tabs-right a:nth-child(-n+3) {
    border-top: none;
}

/* diagram */
.diagram {
    display: block;
}
.diagram text {
    font-family: "Liberation Sans", Arial, sans-serif;
    fill: #111;
}
.t-xs { font-size: 18px; }
.t-s { font-size: 18px; }
.t-m { font-size: 20px; }
.t-r { font-size: 20.5px; }
.t-l { font-size: 22px; }
.t-xl { font-size: 23.5px; }
.t-xxl { font-size: 25px; }
.t-h { font-size: 26px; }
.t-title { font-size: 35px; }
.t-big { font-size: 42px; }
.rot { font-size: 20px; }
.rot-lg { font-size: 23px; }

.device {
    fill: #b8dfe3;
    stroke: #111;
    stroke-width: 3.4;
}
.frame {
    fill: none;
    stroke: #111;
    stroke-width: 3.2;
}
.box {
    fill: none;
    stroke: #111;
    stroke-width: 5;
}
.ul3 {
    stroke: #111;
    stroke-width: 2;
}
.thin {
    fill: none;
    stroke: #222;
    stroke-width: 1.8;
}
.wire {
    fill: none;
    stroke: #111;
    stroke-width: 1.8;
}
.bus {
    fill: none;
    stroke: #000;
    stroke-width: 4.4;
}
.bus-grey {
    fill: none;
    stroke: #aaa;
    stroke-width: 5;
}
.grey-fill {
    fill: #aaa;
}
.block rect, .block path {
    fill: none;
    stroke: #111;
    stroke-width: 2.6;
}
.block-thin rect, .block-thin path {
    fill: none;
    stroke: #111;
    stroke-width: 2.1;
}
.tri path {
    fill: #fafafa;
    stroke-width: 2.3;
}
.alu {
    fill: none;
    stroke: #111;
    stroke-width: 3;
}
.blue-wire {
    fill: none;
    stroke: #0f67e6;
    stroke-width: 3.6;
}
.int-bus {
    fill: none;
    stroke: #0f67e6;
    stroke-width: 6.5;
}
.blue-fill {
    fill: #0f67e6;
}
.red-wire {
    fill: none;
    stroke: #e2101c;
    stroke-width: 3;
}

/* execution buttons */
.toolbar {
    display: grid;
    grid-template-columns: repeat(5, 187px);
    gap: 1px;
    margin-top: 22px;
}
.tool {
    display: flex;
    flex-direction: column;
    align-items: center;
    height: 90px;
    padding: 12px 0 0;
    border: 0;
    border-radius: 7px;
    font-family: inherit;
    font-size: 19.5px;
    font-weight: bold;
    color: #333;
    background-color: #ccc;
    text-shadow: 0 1px 0 #eee;
}
.tool span {
    margin-top: 5px;
}
.tool-help {
    background-color: #d6de14;
    text-shadow: none;
}

/* control memory listing */
.mc-list {
    position: relative;
    width: 878px;
    height: 679px;
    margin: 21px 0 0 27px;
    overflow: hidden;
    font-size: 20.5px;
    color: #111;
}
.mc-row {
    display: flex;
    align-items: center;
    gap: 25px;
    height: 46.67px;
    padding-top: 3px;
    border-bottom: 1px solid #ddd;
    white-space: nowrap;
}
.mc-row.thick {
    border-bottom-width: 2px;
}
.mc-row.current {
    height: 53px;
    padding-top: 1px;
    font-size: 24.5px;
    font-weight: bold;
    color: #0000cd;
}
.mc-addr {
    width: 97px;
    text-align: right;
}
.scroll-thumb {
    position: absolute;
    top: 5px;
    right: 3px;
    width: 8px;
    height: 59px;
    border-radius: 4px;
    background-color: #c8c8c8;
}
```
